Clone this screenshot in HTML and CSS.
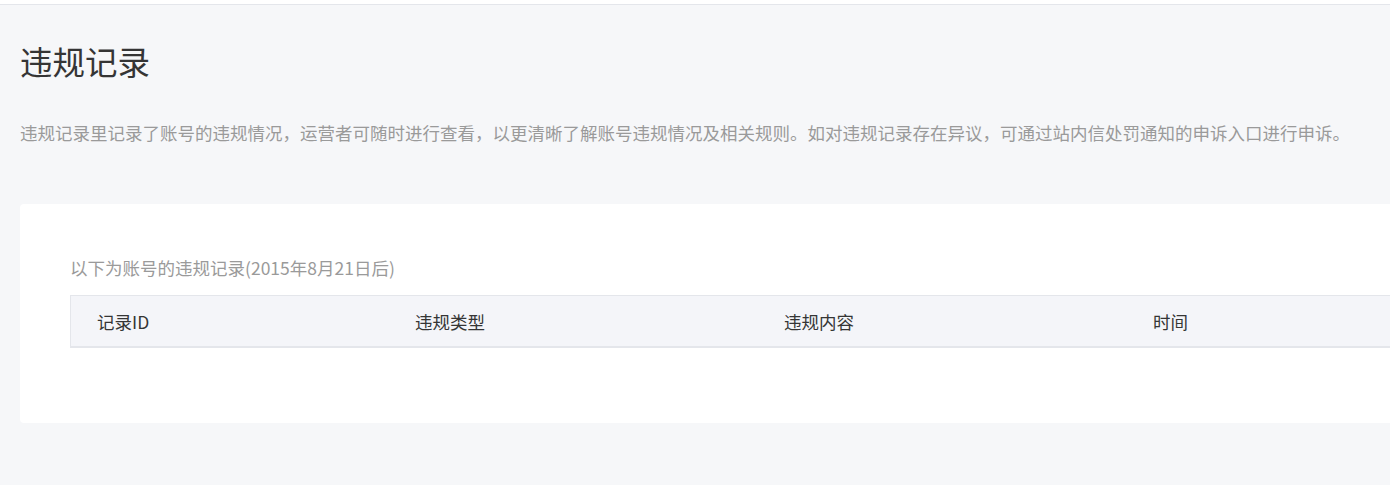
FILE: index.html
```html
<!DOCTYPE html>
<html lang="zh-CN">
<head>
    <meta charset="UTF-8">
    <meta name="viewport" content="width=device-width, initial-scale=1.0">
    <title>违规记录</title>
    <link rel="stylesheet" href="styles.css">
</head>
<body>
    <div class="topbar"></div>
    <main class="main">
        <h1 class="heading">违规记录</h1>
        <p class="intro">违规记录里记录了账号的违规情况，运营者可随时进行查看，以更清晰了解账号违规情况及相关规则。如对违规记录存在异议，可通过站内信处罚通知的申诉入口进行申诉。</p>
        <section class="card">
            <p class="card__tips">以下为账号的违规记录(2015年8月21日后)</p>
            <div class="table">
                <div class="table__head">
                    <div class="table__cell">记录ID</div>
                    <div class="table__cell">违规类型</div>
                    <div class="table__cell">违规内容</div>
                    <div class="table__cell">时间</div>
                </div>
            </div>
        </section>
    </main>
</body>
</html>
```

FILE: styles.css
```css
:root {
    --color-bg: #f6f7f9;
    --color-text: #353535;
    --color-muted: #9a9a9a;
    --color-border: #e4e6eb;
    --color-head-bg: #f4f5f9;
}

body {
    margin: 0;
    background-color: var(--color-bg);
    color: var(--color-text);
    font-family: "Noto Sans CJK SC", "Noto Sans", sans-serif;
    font-size: 17.5px;
    overflow-x: hidden;
}

.topbar {
    height: 4px;
    background-color: #fff;
    border-bottom: 1px solid var(--color-border);
}

.main {
    padding: 33px 0 0 20px;
}

.heading {
    margin: 0;
    font-size: 32.5px;
    font-weight: 400;
    line-height: 45px;
}

.intro {
    margin: 37px 0 0;
    line-height: 26px;
    color: var(--color-muted);
    white-space: nowrap;
}

.card {
    margin: 58px -60px 0 0;
    padding: 51px 0 75px 50px;
    background-color: #fff;
    border-radius: 4px;
}

.card__tips {
    margin: 0;
    line-height: 26px;
    color: var(--color-muted);
}

.table {
    margin-top: 14px;
}

.table__head {
    display: grid;
    grid-template-columns: 318px 369px 369px 1fr;
    height: 50px;
    align-items: center;
    background-color: var(--color-head-bg);
    border: 1px solid var(--color-border);
    border-bottom-width: 2px;
    border-right: none;
}

.table__cell {
    padding-left: 26px;
}
```
